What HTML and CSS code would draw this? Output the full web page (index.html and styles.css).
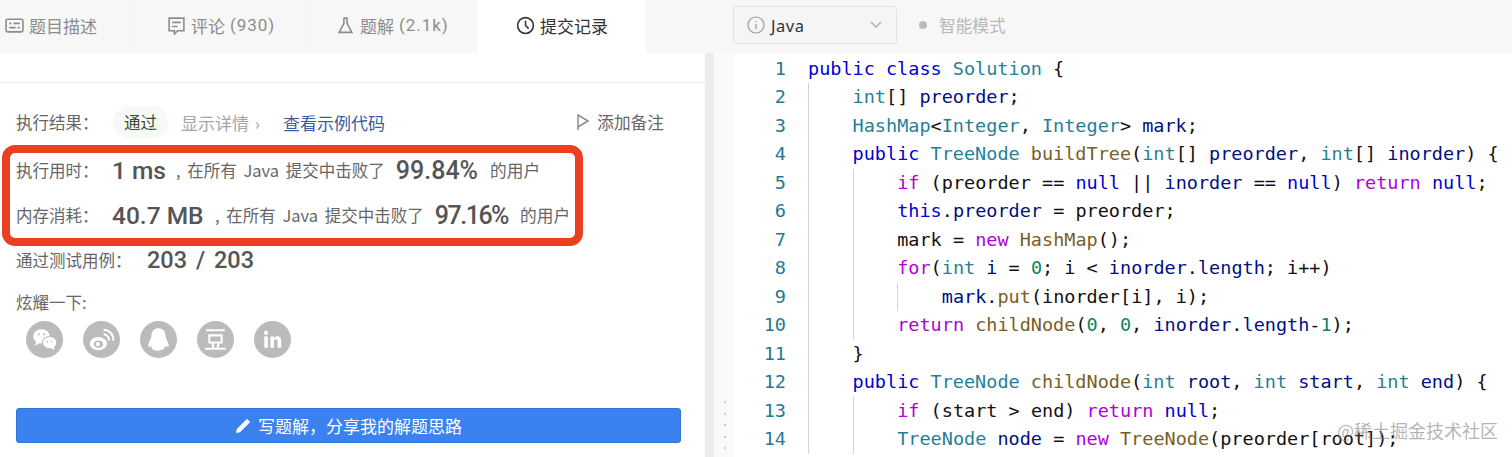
FILE: index.html
```html
<!DOCTYPE html>
<html lang="zh">
<head>
<meta charset="utf-8">
<title>提交记录</title>
<link rel="stylesheet" href="styles.css">
</head>
<body>
<div class="app">
  <section class="left">
    <nav class="tabs">
      <div class="tab t1"><svg class="ti" viewBox="0 0 18 18"><rect x="1" y="3" width="16" height="12" rx="1.500"/><path d="M4 7h2M8 7h6M4 11h6M12 11h2"/></svg>题目描述</div>
      <div class="tab t2"><svg class="ti" viewBox="0 0 18 18"><path d="M2 2h14v12h-6l-3 3v-3H2zM5 6h8M5 10h5"/></svg>评论<span class="lat"> (930)</span></div>
      <div class="tab t3"><svg class="ti" viewBox="0 0 18 18"><path d="M7 2h4M7.500 2v5L3 15.500h12L10.500 7V2"/></svg>题解<span class="lat"> (2.1k)</span></div>
      <div class="tab t4 active"><svg class="ti" viewBox="0 0 18 18"><circle cx="9" cy="9" r="7.500"/><path d="M9 4.500V9l3 3"/></svg>提交记录</div>
      <div class="tab t5"></div>
    </nav>
    <div class="rule"></div>
    <div class="result">
      <span class="label">执行结果：</span>
      <span class="pass">通过</span>
      <span class="detail">显示详情 ›</span>
      <a class="sample">查看示例代码</a>
      <span class="note"><svg class="flag" viewBox="0 0 14 18"><path d="M2 1v16M2 2l10 6-10 6"/></svg>添加备注</span>
    </div>
    <div class="redbox">
      <div class="stat">
        <span class="label">执行用时：</span><b class="big v1">1 ms</b><span class="txt">, 在所有 Java 提交中击败了</span><b class="pct">99.84%</b><span class="tail">的用户</span>
      </div>
      <div class="stat">
        <span class="label">内存消耗：</span><b class="big v2">40.7 MB</b><span class="txt">, 在所有 Java 提交中击败了</span><b class="pct pct2">97.16%</b><span class="tail">的用户</span>
      </div>
    </div>
    <div class="cases"><span class="label">通过测试用例：</span><b class="big frac">203 / 203</b></div>
    <div class="show">炫耀一下:</div>
    <div class="share">
      <span class="sico"><svg viewBox="0 0 36 36"><ellipse cx="15" cy="15" rx="8" ry="7"/><path d="M10 20l-1 4 4-2z"/><ellipse class="ring" cx="23" cy="21" rx="7" ry="6"/><path d="M27 25l1 3-4-1.500z"/><circle class="o" cx="12.500" cy="13" r="1"/><circle class="o" cx="17.500" cy="13" r="1"/><circle class="o" cx="21" cy="20" r="0.800"/><circle class="o" cx="25" cy="20" r="0.800"/></svg></span>
      <span class="sico"><svg viewBox="0 0 36 36"><ellipse cx="15" cy="22" rx="8.500" ry="6.500"/><ellipse class="o" cx="15" cy="22.500" rx="4.500" ry="3.500"/><circle cx="14.500" cy="22.500" r="2"/><path class="l" d="M20 13a5 5 0 0 1 5 6M20 8.500a9.500 9.500 0 0 1 9.500 10.500"/></svg></span>
      <span class="sico"><svg viewBox="0 0 36 36"><path d="M18 7c5 0 7 4 7 8 0 2 3 6 3 9 0 2-2 1-3 0-1 3-3 4-7 5-5 0-7-2-7-5-1 1-3 2-3 0 0-3 3-7 3-9 0-4 2-8 7-8z"/></svg></span>
      <span class="sico"><svg viewBox="0 0 36 36"><path class="l" d="M9 9h18M12 14h12v7H12zM15 21l1 6M21 21l-1 6M8 27h20"/></svg></span>
      <span class="sico"><svg viewBox="0 0 36 36"><rect x="10" y="15" width="3.500" height="11"/><circle cx="11.700" cy="11.500" r="2"/><path d="M16 15h3.500v1.500c2-2.500 7-2.500 7 2.500v7H23v-6c0-3-3.500-3-3.500 0v6H16z"/></svg></span>
    </div>
    <button class="write"><svg class="pen" viewBox="0 0 16 16"><path d="M1 15l.8-4L10.500 2.300l3.200 3.200L5 14.200zM11.400 1.400a1 1 0 0 1 1.400 0l1.800 1.800a1 1 0 0 1 0 1.400l-.8.800L10.600 2.200z"/></svg>写题解，分享我的解题思路</button>
  </section>

  <section class="right">
    <header class="toolbar">
      <div class="select">
        <svg class="info" viewBox="0 0 18 18"><circle cx="9" cy="9" r="8"/><path d="M9 8v5M9 5v1"/></svg>
        <span class="lang">Java</span>
        <svg class="chev" viewBox="0 0 12 8"><path d="M1 1l5 5 5-5"/></svg>
      </div>
      <span class="dot"></span><span class="mode">智能模式</span>
    </header>
    <div class="body">
      <div class="split"><i></i><i></i><i></i><i></i><i></i></div>
      <div class="editor">
        <div class="ln"><span class="no">1</span><span class="k">public</span> <span class="k">class</span> <span class="t">Solution</span> {</div>
        <div class="ln"><span class="no">2</span><span class="ind"></span><span class="t">int</span>[] <span class="v">preorder</span>;</div>
        <div class="ln"><span class="no">3</span><span class="ind"></span><span class="t">HashMap</span>&lt;<span class="t">Integer</span>, <span class="t">Integer</span>&gt; <span class="v">mark</span>;</div>
        <div class="ln"><span class="no">4</span><span class="ind"></span><span class="k">public</span> <span class="t">TreeNode</span> <span class="f">buildTree</span>(<span class="t">int</span>[] <span class="v">preorder</span>, <span class="t">int</span>[] <span class="v">inorder</span>) {</div>
        <div class="ln"><span class="no">5</span><span class="ind"></span><span class="ind"></span><span class="c">if</span> (<span class="v0">preorder</span> == <span class="k">null</span> || <span class="v">inorder</span> == <span class="k">null</span>) <span class="c">return</span> <span class="k">null</span>;</div>
        <div class="ln"><span class="no">6</span><span class="ind"></span><span class="ind"></span><span class="k">this</span>.<span class="v">preorder</span> = <span class="v0">preorder</span>;</div>
        <div class="ln"><span class="no">7</span><span class="ind"></span><span class="ind"></span><span class="v0">mark</span> = <span class="c">new</span> <span class="f">HashMap</span>();</div>
        <div class="ln"><span class="no">8</span><span class="ind"></span><span class="ind"></span><span class="c">for</span>(<span class="t">int</span> <span class="v">i</span> = <span class="n">0</span>; <span class="v0">i</span> &lt; <span class="v">inorder</span>.<span class="v">length</span>; <span class="v0">i</span>++)</div>
        <div class="ln"><span class="no">9</span><span class="ind"></span><span class="ind"></span><span class="ind"></span><span class="v">mark</span>.<span class="f">put</span>(<span class="v0">inorder</span>[<span class="v0">i</span>], <span class="v0">i</span>);</div>
        <div class="ln"><span class="no">10</span><span class="ind"></span><span class="ind"></span><span class="c">return</span> <span class="f">childNode</span>(<span class="n">0</span>, <span class="n">0</span>, <span class="v">inorder</span>.<span class="v">length</span>-<span class="n">1</span>);</div>
        <div class="ln"><span class="no">11</span><span class="ind"></span>}</div>
        <div class="ln"><span class="no">12</span><span class="ind"></span><span class="k">public</span> <span class="t">TreeNode</span> <span class="f">childNode</span>(<span class="t">int</span> <span class="v">root</span>, <span class="t">int</span> <span class="v">start</span>, <span class="t">int</span> <span class="v">end</span>) {</div>
        <div class="ln"><span class="no">13</span><span class="ind"></span><span class="ind"></span><span class="c">if</span> (<span class="v0">start</span> &gt; <span class="v0">end</span>) <span class="c">return</span> <span class="k">null</span>;</div>
        <div class="ln"><span class="no">14</span><span class="ind"></span><span class="ind"></span><span class="t">TreeNode</span> <span class="v">node</span> = <span class="c">new</span> <span class="f">TreeNode</span>(<span class="v0">preorder</span>[<span class="v0">root</span>]);</div>
      </div>
    </div>
  </section>
</div>
<div class="mark">@稀土掘金技术社区</div>
</body>
</html>
```
FILE: styles.css
```css
* { box-sizing: border-box; }
html, body { margin: 0; height: 457px; overflow: hidden; background: #fff; }
body { font-family: "Noto Sans CJK SC", "Noto Sans", sans-serif; color: #555; position: relative; }
.app { display: flex; height: 457px; }

.left { width: 705px; flex: none; }
.tabs { display: flex; height: 53px; background: #f7f7f7; font-size: 17px; color: #8c8c8c; }
.tab { display: flex; align-items: center; height: 53px; padding-bottom: 3px; white-space: pre; }
.tab .ti { width: 19px; height: 19px; margin-right: 5px; fill: none; stroke: currentColor; stroke-width: 1.500; flex: none; }
.lat { font-family: Roboto, sans-serif; font-size: 17px; letter-spacing: .9px; }
.t1 { width: 135px; padding-left: 5px; }
.t2 { width: 171px; padding-left: 32px; }
.t3 { width: 171px; padding-left: 30px; }
.t4 { width: 169px; padding-left: 39px; background: #fff; color: #333; }
.t5 { flex: 1; }
.t1, .t2 { border-right: 1px solid #f1f1f1; background-clip: padding-box; }
.rule { height: 30px; border-bottom: 1px solid #eaeaea; }

.label { font-size: 16.500px; color: #666; flex: none; }
.result { display: flex; align-items: center; height: 40px; margin-top: 19px; padding: 0 41px 0 16px; font-size: 16.500px; }
.result .label { width: 97px; }
.pass { width: 55px; height: 32px; line-height: 32px; text-align: center; border-radius: 16px; background: #f6faf4; color: #3c4a3a; font-size: 16.500px; }
.detail { margin-left: 13px; width: 102px; color: #a6a6a6; font-size: 17px; word-spacing: 2px; }
.sample { color: #3b5c9e; font-size: 17px; }
.note { display: flex; align-items: center; margin-left: auto; font-size: 16.700px; color: #666; }
.flag { width: 14px; height: 18px; margin-right: 7px; fill: none; stroke: #8c8c8c; stroke-width: 1.500; }

.redbox { display: flex; flex-direction: column; gap: 11px; width: 581px; height: 101px; margin: 3px 0 0 2px; padding-left: 6px; border: 8px solid #ec3f22; border-radius: 13px; }
.stat { display: flex; align-items: center; height: 34px; white-space: nowrap; }
.stat .label { width: 96px; }
.stat .tail { font-size: 16.700px; color: #666; margin-left: 12px; }
.big { font-family: Roboto, sans-serif; font-weight: 500; font-size: 24.500px; color: #555; flex: none; }
.v1 { width: 64px; }
.v2 { width: 103px; }
.frac { font-size: 23.500px; word-spacing: 3px; }
.txt { font-size: 16.500px; color: #666; word-spacing: 3px; }
.pct { font-family: Roboto, sans-serif; font-weight: 500; font-size: 25px; color: #555; margin-left: 11px; }
.pct2 { letter-spacing: -1.500px; }

.cases { display: flex; align-items: center; height: 36px; margin-top: -4px; padding-left: 16px; white-space: nowrap; }
.cases .label { width: 131px; }
.show { height: 22px; margin-top: 13px; padding-left: 16px; font-size: 16.500px; line-height: 22px; color: #666; }
.share { display: flex; gap: 20px; margin-top: 8px; padding-left: 26px; }
.sico { width: 37px; height: 37px; border-radius: 50%; background: #bbb; flex: none; }
.sico svg { display: block; width: 37px; height: 37px; fill: #fff; }
.sico .o { fill: #bbb; }
.sico .ring { stroke: #bbb; stroke-width: 1; }
.sico .l { fill: none; stroke: #fff; stroke-width: 2; }

.write { display: flex; align-items: center; justify-content: center; width: 665px; height: 35px; margin: 50px 0 0 16px; padding: 0; border: 1px solid #2f74d8; border-radius: 3px; background: #3b82f0; color: #fff; font: 17px "Noto Sans CJK SC", sans-serif; }
.pen { width: 16px; height: 16px; margin-right: 7px; fill: #fff; }

.right { flex: 1; min-width: 0; }
.toolbar { display: flex; align-items: center; height: 53px; padding: 0 0 3px 28px; background: #f7f7f7; }
.select { display: flex; align-items: center; width: 164px; height: 38px; padding: 0 14px 0 13px; background: #f5f5f5; border: 1px solid #e3e3e3; border-radius: 3px; }
.info { width: 18px; height: 18px; margin-right: 6px; fill: none; stroke: #999; stroke-width: 1.200; }
.lang { font-family: "Noto Sans", sans-serif; font-size: 16.500px; color: #333; letter-spacing: .5px; }
.chev { width: 12px; height: 8px; margin-left: auto; fill: none; stroke: #aaa; stroke-width: 1.300; }
.dot { width: 8px; height: 8px; margin-left: 22px; border-radius: 50%; background: #bbb; }
.mode { margin-left: 12px; font-size: 16.700px; color: #b8b8b8; }

.body { display: flex; height: 404px; }
.split { width: 28px; flex: none; display: flex; flex-direction: column; align-items: center; gap: 9.500px; padding: 348px 0 0 11px; background: linear-gradient(90deg, #ececec 9px, #fafafa 9px); }
.split i { width: 2px; height: 2px; background: #bdbdbd; border-radius: 50%; flex: none; }
.editor { flex: 1; min-width: 0; padding-top: 1.500px; background: #fff; font-family: "DejaVu Sans Mono", monospace; font-size: 18.500px; color: #111; }
.ln { height: 28.500px; line-height: 28.500px; white-space: pre; }
.no { display: inline-block; width: 53px; margin-right: 22px; text-align: right; color: #237893; }
.ind { display: inline-block; width: 44.600px; height: 28.500px; vertical-align: top; border-left: 1px solid #d3d3d3; }
.k { color: #0000d8; }
.t { color: #267f99; }
.f { color: #795e26; }
.c { color: #af00db; }
.v { color: #001080; }
.v0 { color: #111; }
.n { color: #098658; }

.mark { position: absolute; left: 1337px; top: 417px; font-size: 18px; line-height: 26px; color: rgba(130,130,130,.6); white-space: nowrap; }
```
